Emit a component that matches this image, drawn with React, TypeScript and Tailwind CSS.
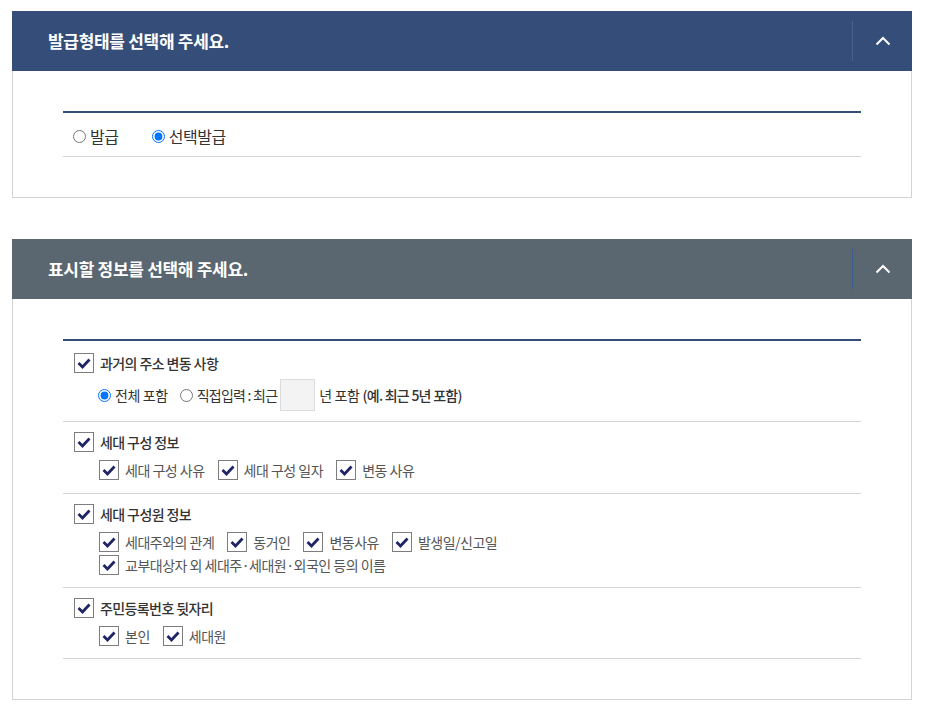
import React from "react";

const font = { fontFamily: '"Noto Sans CJK KR", "Noto Sans", sans-serif' };

const Check = ({ label, sub = false }: { label: string; sub?: boolean }) => (
  <label className="flex h-[20px] items-center gap-[6px]">
    <span className="flex h-[20px] w-[20px] shrink-0 items-center justify-center border border-[#7d7d7d] bg-white">
      <svg width="14" height="11" viewBox="0 0 14 11">
        <polyline points="1.5,5 5.5,9 12.5,1.5" fill="none" stroke="#1f2566" strokeWidth="2.8" />
      </svg>
    </span>
    <span
      className={
        sub
          ? "text-[14px] leading-[20px] tracking-[-0.5px] text-[#555]"
          : "text-[14px] font-medium leading-[20px] tracking-[-0.6px] text-[#333]"
      }
    >
      {label}
    </span>
  </label>
);

const Radio = ({ label, checked, name }: { label: string; checked?: boolean; name: string }) => (
  <label className="flex items-center gap-[4px]">
    <input type="radio" name={name} defaultChecked={checked} className="m-0 h-[13px] w-[13px]" />
    <span className="text-[#333]">{label}</span>
  </label>
);

const Header = ({ title, bg, line }: { title: string; bg: string; line: string }) => (
  <div className={`flex h-[60px] items-center ${bg}`}>
    <h2 className="flex-1 pl-[36px] text-[17px] font-bold tracking-[-0.3px] text-white">{title}</h2>
    <div className={`h-[40px] w-px ${line}`} />
    <button className="flex h-full w-[59px] items-center justify-center">
      <svg width="16" height="10" viewBox="0 0 16 10">
        <polyline points="1.5,8.5 8,2 14.5,8.5" fill="none" stroke="#fff" strokeWidth="2" />
      </svg>
    </button>
  </div>
);

export default function App() {
  return (
    <div className="min-h-[711px] bg-white px-[12px] pt-[11px]" style={font}>
      <section className="w-[900px]">
        <Header title="발급형태를 선택해 주세요." bg="bg-[#344d79]" line="bg-[#4b6290]" />
        <div className="border border-t-0 border-[#d4d4d4] px-[50px] py-[40px]">
          <div className="border-t-2 border-[#344d79]">
            <div className="flex h-[44px] items-center gap-[33px] border-b border-[#d5d5d5] pl-[10px] pt-[3px] text-[16px] tracking-[-0.4px]">
              <Radio name="type" label="발급" />
              <Radio name="type" label="선택발급" checked />
            </div>
          </div>
        </div>
      </section>

      <section className="mt-[41px] w-[900px]">
        <Header title="표시할 정보를 선택해 주세요." bg="bg-[#5a6670]" line="bg-[#3e5a8e]" />
        <div className="border border-t-0 border-[#d4d4d4] px-[50px] py-[40px]">
          <div className="border-t-2 border-[#344d79]">
            <div className="border-b border-[#d5d5d5] pb-[10px] pl-[11px] pt-[12px]">
              <Check label="과거의 주소 변동 사항" />
              <div className="mt-[6px] flex h-[32px] items-center pl-[24px] text-[14px] leading-[20px] tracking-[-0.4px]">
                <Radio name="addr" label="전체 포함" checked />
                <div className="ml-[12px] flex items-center gap-[4px]">
                  <input type="radio" name="addr" className="m-0 h-[13px] w-[13px]" />
                  <span className="tracking-[-0.75px] text-[#333]">직접입력 : 최근</span>
                </div>
                <input
                  type="text"
                  className="ml-[3px] h-[32px] w-[35px] border border-[#dcdcdc] bg-[#f3f3f3]"
                />
                <span className="ml-[4px] text-[#333]">년 포함</span>
                <span className="ml-[3px] font-medium tracking-[-0.75px] text-[#333]">(예. 최근 5년 포함)</span>
              </div>
            </div>

            <div className="border-b border-[#d5d5d5] pb-[13px] pl-[11px] pt-[10px]">
              <Check label="세대 구성 정보" />
              <div className="mt-[8px] flex gap-[13px] pl-[25px]">
                <Check sub label="세대 구성 사유" />
                <Check sub label="세대 구성 일자" />
                <Check sub label="변동 사유" />
              </div>
            </div>

            <div className="border-b border-[#d5d5d5] pb-[12px] pl-[11px] pt-[10px]">
              <Check label="세대 구성원 정보" />
              <div className="mt-[8px] flex gap-[13px] pl-[25px]">
                <Check sub label="세대주와의 관계" />
                <Check sub label="동거인" />
                <Check sub label="변동사유" />
                <Check sub label="발생일/신고일" />
              </div>
              <div className="mt-[3px] flex pl-[25px]">
                <Check sub label="교부대상자 외 세대주·세대원·외국인 등의 이름" />
              </div>
            </div>

            <div className="border-b border-[#d5d5d5] pb-[12px] pl-[11px] pt-[10px]">
              <Check label="주민등록번호 뒷자리" />
              <div className="mt-[8px] flex gap-[13px] pl-[25px]">
                <Check sub label="본인" />
                <Check sub label="세대원" />
              </div>
            </div>
          </div>
        </div>
      </section>
    </div>
  );
}
